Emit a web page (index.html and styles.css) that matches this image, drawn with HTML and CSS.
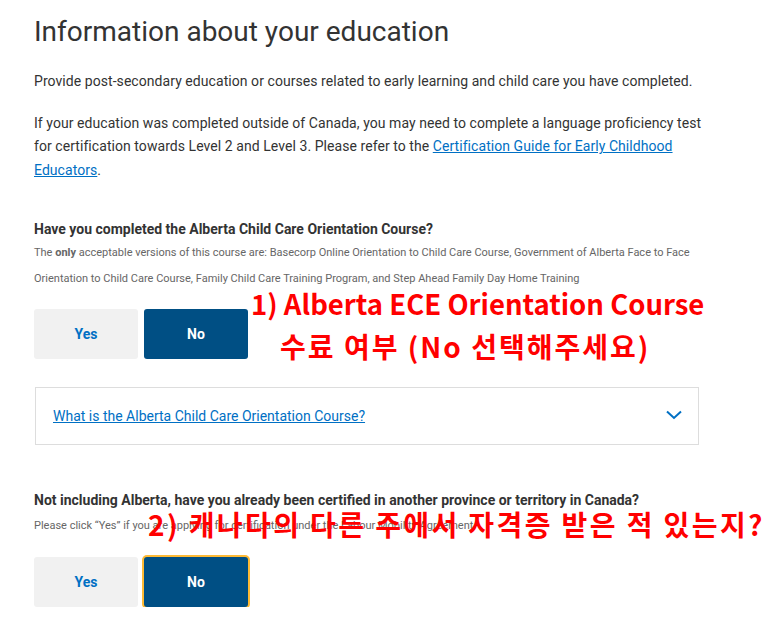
FILE: index.html
```html
<!DOCTYPE html>
<html lang="en">
<head>
<meta charset="utf-8">
<title>Information about your education</title>
<link rel="stylesheet" href="styles.css">
</head>
<body>
<main class="page">
  <h1 class="title">Information about your education</h1>
  <p class="para p1">Provide post-secondary education or courses related to early learning and child care you have completed.</p>
  <p class="para p2">If your education was completed outside of Canada, you may need to complete a language proficiency test for certification towards Level 2 and Level 3. Please refer to the <a href="#" class="link">Certification Guide for Early Childhood Educators</a>.</p>

  <section class="question q1">
    <h2 class="q-title">Have you completed the Alberta Child Care Orientation Course?</h2>
    <p class="hint hint-long">The <b>only</b> acceptable versions of this course are: Basecorp Online Orientation to Child Care Course, Government of Alberta Face to Face Orientation to Child Care Course, Family Child Care Training Program, and Step Ahead Family Day Home Training</p>
    <div class="choices">
      <button class="btn btn-yes">Yes</button>
      <button class="btn btn-no">No</button>
    </div>
    <div class="note note1">
      <div class="note1-l1">1) Alberta ECE Orientation Course</div>
      <div class="note1-l2">수료 여부 (No 선택해주세요)</div>
    </div>
  </section>

  <div class="accordion">
    <a href="#" class="link acc-link">What is the Alberta Child Care Orientation Course?</a>
    <svg class="chev" width="16" height="10" viewBox="0 0 16 10"><path d="M1 1.5 L8 8 L15 1.5" fill="none" stroke="#0070c4" stroke-width="2"/></svg>
  </div>

  <section class="question q2">
    <h2 class="q-title">Not including Alberta, have you already been certified in another province or territory in Canada?</h2>
    <p class="hint">Please click “Yes” if you are applying for certification under the Labour Mobility Agreement.</p>
    <div class="choices">
      <button class="btn btn-yes">Yes</button>
      <button class="btn btn-no focused">No</button>
    </div>
    <div class="note note2">2) 캐나다의 다른 주에서 자격증 받은 적 있는지?</div>
  </section>
</main>
</body>
</html>
```

FILE: styles.css
```css
html, body {
  margin: 0;
  padding: 0;
  background: #ffffff;
}
body {
  font-family: Roboto, "Noto Sans", "Liberation Sans", sans-serif;
  color: #333333;
}
.page {
  padding: 16px 0 0 34px;
  width: 680px;
}
.title {
  margin: 0;
  font-size: 28px;
  font-weight: 400;
  line-height: 32px;
  color: #333333;
}
.para {
  margin: 0;
  font-size: 14px;
  line-height: 23.5px;
  letter-spacing: 0.06px;
}
.p1 { margin-top: 22px; }
.p2 { margin-top: 18px; }
.link {
  color: #0070c4;
  text-decoration: underline;
}
.question {
  position: relative;
}
.q1 { margin-top: 37px; }
.q-title {
  margin: 0;
  font-size: 14px;
  font-weight: 700;
  line-height: 20px;
  color: #333333;
}
.hint {
  margin: 1px 0 0 0;
  font-size: 11px;
  line-height: 26px;
  color: #666666;
}
.hint b { font-weight: 700; }
.choices {
  display: flex;
  gap: 6px;
  margin-top: 17px;
}
.btn {
  width: 104px;
  height: 50px;
  border: none;
  border-radius: 3px;
  font-family: Roboto, "Liberation Sans", sans-serif;
  font-size: 14px;
  font-weight: 700;
  padding: 0;
}
.btn-yes {
  background: #f1f1f1;
  color: #0070c4;
}
.btn-no {
  background: #004f84;
  color: #ffffff;
}
.btn-no.focused {
  box-shadow: 0 0 0 2px #feba35;
}
.accordion {
  margin: 28px 0 0 1px;
  width: 664px;
  height: 58px;
  box-sizing: border-box;
  border: 1px solid #dddddd;
  display: flex;
  align-items: center;
  justify-content: space-between;
  padding: 0 16px 0 17px;
}
.acc-link {
  font-size: 14px;
}
.chev { display: block; margin-top: -3px; }
.q2 { margin-top: 45px; }
.q2 .hint { margin-top: 3px; }
.q2 .choices { margin-top: 18px; }
.note {
  position: absolute;
  color: #ff0000;
  font-family: "Noto Sans CJK KR", "Noto Sans", sans-serif;
  font-weight: 700;
  font-size: 28px;
  line-height: 43px;
  white-space: nowrap;
}
.note1 {
  left: 217px;
  top: 63px;
}
.note1-l1 {
  font-size: 27.5px;
}
.note1-l2 {
  padding-left: 29px;
  letter-spacing: 2px;
}
.note2 {
  left: 114px;
  top: 14px;
  line-height: 40px;
  letter-spacing: 2.4px;
}
```
